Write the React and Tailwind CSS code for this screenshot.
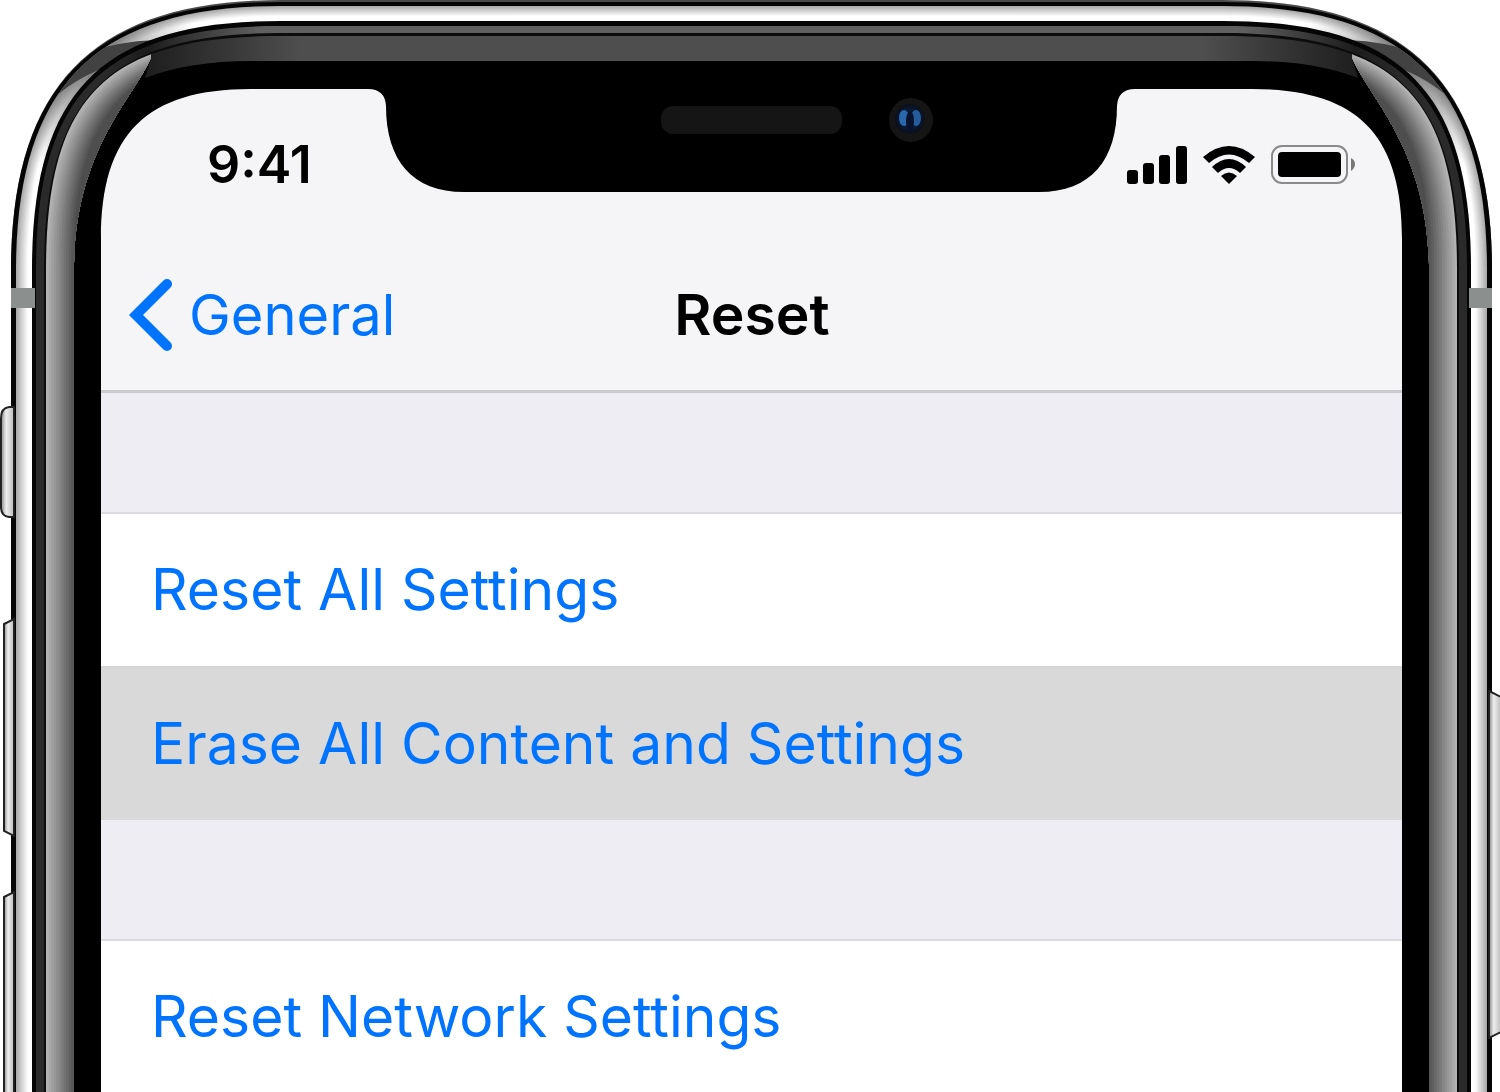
const groups = [
  {
    id: "content",
    items: [
      { label: "Reset All Settings" },
      { label: "Erase All Content and Settings", active: true },
    ],
  },
  {
    id: "network",
    items: [{ label: "Reset Network Settings" }],
  },
];

// left half of the body outline: x/y is the edge, r the corner length, c the curve handle
function outline([x, y, r, c]) {
  return `M${x} 1100V${y + r}C${x} ${y + c} ${x + c} ${y} ${x + r} ${y}H752V1100Z`;
}

function mix(a, b, t) {
  return a.map((v, i) => v + (b[i] - v) * t);
}

function gray(a, b, t) {
  const v = Math.round(a + (b - a) * t);
  return `rgb(${v},${v},${v})`;
}

const steps = [0, 1, 2, 3, 4, 5, 6, 7, 8, 9, 10, 11];

function HalfFrame() {
  return (
    <g>
      <path d={outline([11, 0, 270, 84])} fill="#4a4a4a" />
      <path d={outline([11, 2, 269, 83])} fill="#050505" />

      {/* steel band */}
      {steps.map((s) => (
        <path
          key={s}
          d={outline(mix([16, 6, 264, 80], [30, 18, 250, 72], s / 11))}
          fill={gray(150, 255, Math.min(1, 0.2 + s / 11))}
        />
      ))}
      <g clipPath="url(#steel)">
        <rect x="0" y="0" width="260" height="260" fill="url(#corner-shade)" />
        <path d="M156 40Q118 41 82 54L40 112Q66 82 104 68Z" fill="#424242" />
      </g>

      {/* black gasket */}
      <path d={outline([32, 21, 248, 70])} fill="#050505" />
      <path d={outline([36, 26, 243, 68])} fill="url(#rim)" />
      <path d={outline([44, 33, 236, 64])} fill="#0c0c0c" />

      {/* glass edge, lit from the top and from the side */}
      <path d={outline([46, 36, 234, 60])} fill="url(#glass-top)" />
      <path d="M40 1100V0H151V58L145 78Q190 61 250 61H752V1100Z" fill="#000" clipPath="url(#inner)" />
      <g clipPath="url(#side)">
        {steps.map((s) => (
          <path
            key={s}
            d={outline(mix([46, 36, 234, 60], [74, 50, 200, 60], s / 11))}
            fill={gray(178, 78, s / 11)}
          />
        ))}
      </g>
    </g>
  );
}

function PhoneFrame() {
  return (
    <svg
      viewBox="0 0 1500 1093"
      preserveAspectRatio="xMidYMin slice"
      className="pointer-events-none absolute inset-0 h-full w-full"
      aria-hidden="true"
    >
      <defs>
        <radialGradient id="corner-shade" cx="92" cy="68" r="110" gradientUnits="userSpaceOnUse">
          <stop offset="0" stopColor="#5a5a5a" stopOpacity="0.8" />
          <stop offset="0.4" stopColor="#666" stopOpacity="0.5" />
          <stop offset="1" stopColor="#888" stopOpacity="0" />
        </radialGradient>
        <linearGradient id="rim" x1="100" y1="0" x2="260" y2="0" gradientUnits="userSpaceOnUse">
          <stop offset="0" stopColor="#2a2a2a" />
          <stop offset="0.3" stopColor="#1c1c1c" />
          <stop offset="1" stopColor="#606060" />
        </linearGradient>
        <linearGradient id="glass-top" x1="140" y1="0" x2="300" y2="0" gradientUnits="userSpaceOnUse">
          <stop offset="0" stopColor="#1c1c1c" />
          <stop offset="1" stopColor="#4e4e4e" />
        </linearGradient>
        <linearGradient id="key">
          <stop offset="0" stopColor="#888" />
          <stop offset="0.4" stopColor="#eee" />
          <stop offset="1" stopColor="#bbb" />
        </linearGradient>
        <radialGradient id="lens">
          <stop offset="0" stopColor="#06102a" />
          <stop offset="0.6" stopColor="#0a1a38" />
          <stop offset="1" stopColor="#0a0f18" />
        </radialGradient>
        <clipPath id="steel">
          <path d={outline([16, 6, 264, 80])} />
        </clipPath>
        <clipPath id="inner">
          <path d={outline([46, 36, 234, 60])} />
        </clipPath>
        <clipPath id="side">
          <path d="M0 1100V0H151V58C132 100 76 150 74 265V1100Z" />
        </clipPath>
        <mask id="screen">
          <rect width="1500" height="1100" fill="#fff" />
          <path
            d="M101 1100V239C101 134 146 89 251 89H368Q385 89 386 106C386 160 412 192 464 192H1039C1091 192 1117 160 1117 106Q1118 89 1135 89H1252C1357 89 1402 134 1402 239V1100Z"
            fill="#000"
          />
        </mask>
      </defs>

      <g mask="url(#screen)">
        <path d="M0 0H281C95 0 11 84 11 270L0 280Z" fill="#fff" />
        <path d="M1503 0H1222C1408 0 1492 84 1492 270L1503 280Z" fill="#fff" />
        <HalfFrame />
        <g transform="translate(1503 0) scale(-1 1)">
          <HalfFrame />
        </g>

        <rect x="11" y="288" width="24" height="20" fill="#8b8f8e" />
        <rect x="1469" y="288" width="23" height="20" fill="#8b8f8e" />

        {/* speaker and camera */}
        <rect x="661" y="106" width="181" height="28" rx="12" fill="#151515" />
        <circle cx="911" cy="120" r="22" fill="#151515" />
        <circle cx="910" cy="119" r="15" fill="url(#lens)" />
        <ellipse cx="904" cy="118" rx="5" ry="8" fill="#2a68ae" />
        <ellipse cx="916" cy="118" rx="5" ry="8" fill="#245c9c" />
        <ellipse cx="910" cy="121" rx="4" ry="10" fill="#08122c" />
      </g>

      {/* side keys */}
      <g fill="url(#key)" stroke="#222" strokeWidth="2">
        <path d="M14 407H9Q1 408 1 418V507Q1 516 9 517H14Z" />
        <path d="M4 624L14 619V836L4 831Z" />
        <path d="M4 897L14 892V1102H4Z" />
        <path d="M1489 691L1501 697V1032L1489 1038Z" />
      </g>
    </svg>
  );
}

function SignalIcon() {
  return (
    <svg width="60" height="38" viewBox="0 0 60 38" aria-label="Signal">
      <rect x="0" y="24" width="11" height="14" rx="3" />
      <rect x="16" y="17" width="11" height="21" rx="3" />
      <rect x="32" y="9" width="11" height="29" rx="3" />
      <rect x="49" y="0" width="11" height="38" rx="3" />
    </svg>
  );
}

function WifiIcon() {
  return (
    <svg width="52" height="38" viewBox="0 0 52 38" aria-label="Wi-Fi">
      <path d="M0 11Q26 -11 52 11L46 17Q26 0 6 17Z" />
      <path d="M9 21Q26 5 43 21L37 27Q26 17 15 27Z" />
      <path d="M18 30Q26 23 34 30L26 38Z" />
    </svg>
  );
}

function BatteryIcon() {
  return (
    <svg width="85" height="40" viewBox="0 0 85 40" aria-label="Battery">
      <rect x="1" y="1" width="75" height="37" rx="10" fill="none" stroke="#8a8a8a" strokeWidth="2" />
      <rect x="7" y="7" width="63" height="25" rx="4" />
      <path d="M80 13Q84 15 84 19Q84 23 80 26Z" fill="#777" />
    </svg>
  );
}

function App() {
  return (
    <div className="relative mx-auto w-full max-w-[1500px] overflow-hidden bg-white pr-[97px] pl-[101px] font-['Inter','Liberation_Sans',sans-serif]">
      <header className="border-b-3 border-[#cacace] bg-[#f5f5f7]">
        <div className="flex h-[240px] items-center justify-between pt-[90px] pr-[47px] pl-[106px]">
          <time className="text-[52px] font-semibold">9:41</time>
          <div className="flex items-center gap-4">
            <SignalIcon />
            <WifiIcon />
            <BatteryIcon />
          </div>
        </div>

        <nav className="grid h-[150px] grid-cols-[1fr_auto_1fr] items-center">
          <button className="flex items-center gap-4 pl-7 text-[56px] text-[#0074ff]">
            <svg width="44" height="74" viewBox="0 0 44 74" fill="none" aria-hidden="true">
              <path d="M38 6L7 37L38 68" stroke="currentColor" strokeWidth="10" strokeLinecap="round" />
            </svg>
            General
          </button>
          <h1 className="text-[57px] font-semibold">Reset</h1>
        </nav>
      </header>

      <main className="bg-[#eeedf3]">
        {groups.map((group) => (
          <section key={group.id} className="pt-[119px]">
            <ul className="divide-y-2 divide-[#d6d6d8] border-t-2 border-[#dcdce0]">
              {group.items.map((item) => (
                <li key={item.label}>
                  <button
                    className={`block h-[152px] w-full pl-[50px] text-left text-[57px] text-[#0074ff] ${
                      item.active ? "bg-[#d9d9d9]" : "bg-white"
                    }`}
                  >
                    {item.label}
                  </button>
                </li>
              ))}
            </ul>
          </section>
        ))}
      </main>

      <PhoneFrame />
    </div>
  );
}

export default App;
